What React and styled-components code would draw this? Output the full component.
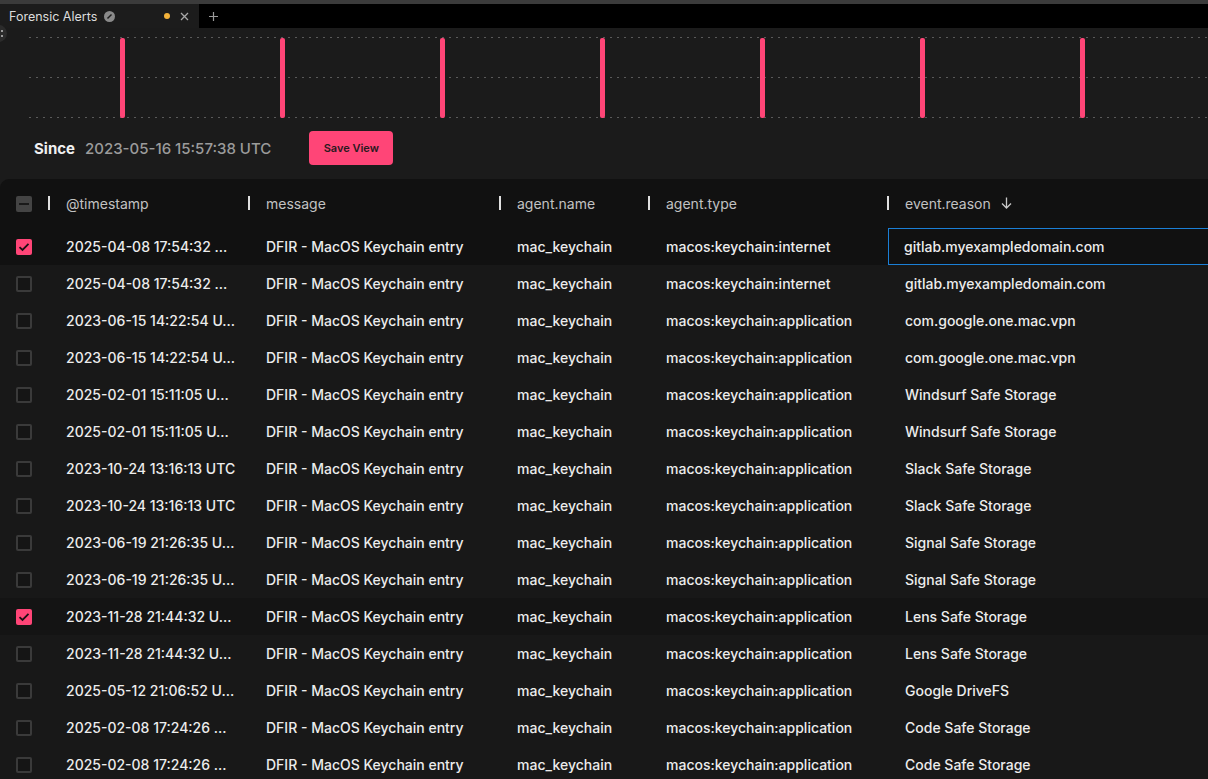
import React from "react";
import styled, { createGlobalStyle } from "styled-components";

const Global = createGlobalStyle`
  html, body { margin: 0; padding: 0; background: #1b1b1b; }
  body { font-family: Inter, "Noto Sans", sans-serif; color: #e6e6e6; overflow: hidden; }
  * { box-sizing: border-box; }
`;

const Page = styled.div`
  width: 1208px;
  height: 779px;
  display: flex;
  flex-direction: column;
  background: #1b1b1b;
  position: relative;
  overflow: hidden;
`;

const TopStripe = styled.div`
  height: 4px;
  background: #3b3b3b;
  flex: none;
`;

const TabBar = styled.div`
  height: 24px;
  background: #000;
  display: flex;
  align-items: stretch;
  flex: none;
`;

const Tab = styled.div`
  width: 199px;
  background: #1c1c1c;
  display: flex;
  align-items: center;
  padding-left: 9px;
  font-size: 12.5px;
  color: #dcdcdc;
  gap: 6px;
`;

const TabTitle = styled.span`
  flex: none;
`;

const Spacer = styled.div`
  flex: 1;
`;

const Dot = styled.span`
  width: 6px;
  height: 6px;
  border-radius: 50%;
  background: #f3b23a;
  margin-right: 3px;
`;

const IconBtn = styled.span`
  display: flex;
  align-items: center;
  justify-content: center;
  width: ${(p) => p.$w || 14}px;
  color: #a0a0a0;
  margin-right: ${(p) => p.$mr || 0}px;
`;

const AddTab = styled.div`
  display: flex;
  align-items: center;
  padding-left: 10px;
  color: #9a9a9a;
`;

const ChartArea = styled.div`
  height: 91px;
  flex: none;
  padding: 9px 0 0 29px;
`;

const Chart = styled.div`
  position: relative;
  height: 81px;
`;

const GridLine = styled.div`
  height: 1px;
  background-image: repeating-linear-gradient(to right, #5a5a5a 0 2px, transparent 2px 7px);
`;

const GridLines = styled.div`
  display: flex;
  flex-direction: column;
  justify-content: space-between;
  height: 81px;
`;

const Bar = styled.div`
  position: absolute;
  top: 1px;
  width: 5px;
  height: 80px;
  border-radius: 2px;
  background: #ff4577;
`;

const Handle = styled.div`
  position: absolute;
  left: -10px;
  top: 25px;
  width: 17px;
  height: 17px;
  border-radius: 50%;
  background: #2b2b2b;
  display: flex;
  align-items: center;
  justify-content: flex-end;
  padding-right: 4px;
`;

const SinceRow = styled.div`
  height: 60px;
  flex: none;
  display: flex;
  align-items: center;
  padding: 0 0 2px 34px;
`;

const SinceLabel = styled.span`
  font-weight: 700;
  font-size: 15px;
  color: #f0f0f0;
  margin-right: 10px;
`;

const SinceValue = styled.span`
  font-weight: 500;
  font-size: 15px;
  color: #9b9b9b;
  margin-right: 38px;
`;

const SaveButton = styled.button`
  width: 84px;
  height: 34px;
  border: none;
  border-radius: 4px;
  background: #ff4577;
  color: #2a1a20;
  font-family: Inter, "Noto Sans", sans-serif;
  font-weight: 600;
  font-size: 11px;
  cursor: pointer;
`;

const Table = styled.div`
  flex: 1;
  background: #111111;
  border-top-left-radius: 9px;
  display: flex;
  flex-direction: column;
`;

const COLS = "49px 200px 251px 149px 239px 1fr";

const HeaderRow = styled.div`
  display: grid;
  grid-template-columns: ${COLS};
  height: 49px;
  align-items: center;
`;

const HeaderCell = styled.div`
  display: flex;
  align-items: center;
  height: 100%;
  font-size: 14px;
  color: #c2c2c2;
  position: relative;
  padding-left: 17px;
  padding-bottom: 1px;
  &::before {
    content: "";
    position: absolute;
    left: -1px;
    top: 17px;
    width: 2px;
    height: 14px;
    background: #e0e0e0;
  }
`;

const CheckCell = styled.div`
  display: flex;
  align-items: center;
  height: 100%;
  padding-left: 16px;
`;

const Row = styled.div`
  display: grid;
  grid-template-columns: ${COLS};
  height: 37px;
  align-items: center;
  background: ${(p) => (p.$active ? "#111111" : p.$selected ? "#141414" : "#181818")};
`;

const Cell = styled.div`
  height: 100%;
  display: flex;
  align-items: center;
  font-size: 14px;
  font-weight: 500;
  color: #ececec;
  white-space: nowrap;
  overflow: hidden;
  border: 1px solid ${(p) => (p.$focused ? "#1b7fd6" : "transparent")};
  border-right: none;
  padding-left: ${(p) => (p.$focused ? 15 : 16)}px;
`;

const Box = styled.div`
  width: 16px;
  height: 16px;
  border-radius: 2px;
  display: flex;
  align-items: center;
  justify-content: center;
  background: ${(p) => (p.$checked ? "#ff4577" : p.$indet ? "#444" : "#151515")};
  border: ${(p) => (p.$checked || p.$indet ? "none" : "2px solid #3a3a3a")};
`;

const SortIcon = styled.span`
  display: inline-flex;
  margin-left: 10px;
  color: #c8c8c8;
`;

const rows = [
  ["2025-04-08 17:54:32 ...", "macos:keychain:internet", "gitlab.myexampledomain.com", true],
  ["2025-04-08 17:54:32 ...", "macos:keychain:internet", "gitlab.myexampledomain.com"],
  ["2023-06-15 14:22:54 U...", "macos:keychain:application", "com.google.one.mac.vpn"],
  ["2023-06-15 14:22:54 U...", "macos:keychain:application", "com.google.one.mac.vpn"],
  ["2025-02-01 15:11:05 U...", "macos:keychain:application", "Windsurf Safe Storage"],
  ["2025-02-01 15:11:05 U...", "macos:keychain:application", "Windsurf Safe Storage"],
  ["2023-10-24 13:16:13 UTC", "macos:keychain:application", "Slack Safe Storage"],
  ["2023-10-24 13:16:13 UTC", "macos:keychain:application", "Slack Safe Storage"],
  ["2023-06-19 21:26:35 U...", "macos:keychain:application", "Signal Safe Storage"],
  ["2023-06-19 21:26:35 U...", "macos:keychain:application", "Signal Safe Storage"],
  ["2023-11-28 21:44:32 U...", "macos:keychain:application", "Lens Safe Storage", true],
  ["2023-11-28 21:44:32 U...", "macos:keychain:application", "Lens Safe Storage"],
  ["2025-05-12 21:06:52 U...", "macos:keychain:application", "Google DriveFS"],
  ["2025-02-08 17:24:26 ...", "macos:keychain:application", "Code Safe Storage"],
  ["2025-02-08 17:24:26 ...", "macos:keychain:application", "Code Safe Storage"],
];

const bars = [91, 251, 411, 571, 731, 891, 1051];

const Check = () => (
  <svg width="12" height="10" viewBox="0 0 12 10">
    <path d="M1.5 5.2 L4.5 8 L10.5 1.8" stroke="#1a1014" strokeWidth="1.8" fill="none" />
  </svg>
);

export default function App() {
  return (
    <Page>
      <Global />
      <TopStripe />
      <TabBar>
        <Tab>
          <TabTitle>Forensic Alerts</TabTitle>
          <IconBtn $w={12}>
            <svg width="11" height="11" viewBox="0 0 12 12">
              <circle cx="6" cy="6" r="6" fill="#8a8a8a" />
              <path d="M3.8 8.2 L8.2 3.8" stroke="#1c1c1c" strokeWidth="1.6" />
            </svg>
          </IconBtn>
          <Spacer />
          <Dot />
          <IconBtn $w={10} $mr={10}>
            <svg width="9" height="9" viewBox="0 0 9 9">
              <path d="M1 1 L8 8 M8 1 L1 8" stroke="#a8a8a8" strokeWidth="1.3" />
            </svg>
          </IconBtn>
        </Tab>
        <AddTab>
          <svg width="9" height="9" viewBox="0 0 9 9">
            <path d="M4.5 0 V9 M0 4.5 H9" stroke="#9a9a9a" strokeWidth="1.2" />
          </svg>
        </AddTab>
      </TabBar>
      <ChartArea>
        <Chart>
          <GridLines>
            <GridLine />
            <GridLine />
            <GridLine />
          </GridLines>
          {bars.map((x) => (
            <Bar key={x} style={{ left: x }} />
          ))}
        </Chart>
      </ChartArea>
      <Handle>
        <svg width="2" height="8" viewBox="0 0 2 8">
          <rect y="0" width="2" height="2" fill="#9a9a9a" />
          <rect y="5" width="2" height="2" fill="#9a9a9a" />
        </svg>
      </Handle>
      <SinceRow>
        <SinceLabel>Since</SinceLabel>
        <SinceValue>2023-05-16 15:57:38 UTC</SinceValue>
        <SaveButton>Save View</SaveButton>
      </SinceRow>
      <Table>
        <HeaderRow>
          <CheckCell>
            <Box $indet>
              <svg width="10" height="2" viewBox="0 0 10 2">
                <rect width="10" height="2" fill="#1a1a1a" />
              </svg>
            </Box>
          </CheckCell>
          <HeaderCell>@timestamp</HeaderCell>
          <HeaderCell>message</HeaderCell>
          <HeaderCell>agent.name</HeaderCell>
          <HeaderCell>agent.type</HeaderCell>
          <HeaderCell>
            event.reason
            <SortIcon>
              <svg width="11" height="12" viewBox="0 0 11 12">
                <path d="M5.5 0.5 V11 M1 6.5 L5.5 11 L10 6.5" stroke="#c8c8c8" strokeWidth="1.3" fill="none" />
              </svg>
            </SortIcon>
          </HeaderCell>
        </HeaderRow>
        {rows.map(([ts, type, reason, checked], i) => (
          <Row key={i} $active={i === 0} $selected={checked}>
            <CheckCell>
              <Box $checked={checked}>{checked && <Check />}</Box>
            </CheckCell>
            <Cell>{ts}</Cell>
            <Cell>DFIR - MacOS Keychain entry</Cell>
            <Cell>mac_keychain</Cell>
            <Cell>{type}</Cell>
            <Cell $focused={i === 0}>{reason}</Cell>
          </Row>
        ))}
      </Table>
    </Page>
  );
}
